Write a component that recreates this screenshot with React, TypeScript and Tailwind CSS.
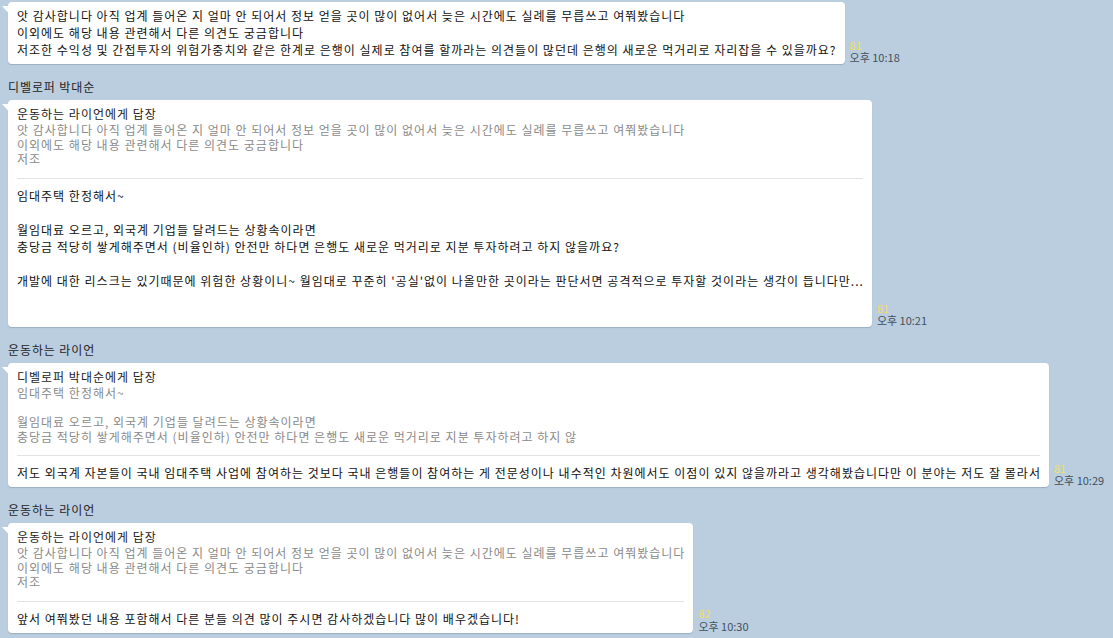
import React from "react";

const FONT = { fontFamily: '"Noto Sans CJK KR", "Noto Sans", sans-serif' };

function Tail() {
  return (
    <svg
      className="absolute left-[-6px] top-[4px]"
      width="6"
      height="7"
      viewBox="0 0 6 7"
    >
      <path d="M0 0H6.5V7Z" fill="#ffffff" />
    </svg>
  );
}

function Meta({ unread, time }: { unread: string; time: string }) {
  return (
    <div className="ml-[5px] shrink-0 whitespace-nowrap text-[11px] leading-[12.5px] pb-[0.5px]">
      <div className="text-[#f2dc66]">{unread}</div>
      <div className="text-[#45505b]">{time}</div>
    </div>
  );
}

function Lines({ lines, cls }: { lines: string[]; cls: string }) {
  return (
    <div className={cls}>
      {lines.map((l, i) => (
        <div key={i} className="whitespace-pre">
          {l === "" ? "\u00a0" : l}
        </div>
      ))}
    </div>
  );
}

function Name({ children }: { children: React.ReactNode }) {
  return (
    <div className="mt-[13.5px] text-[12px] leading-[17px] tracking-[0.9px] text-[#242424] whitespace-nowrap">
      {children}
    </div>
  );
}

function ReplyBubble({
  to,
  quoted,
  main,
  unread,
  time,
  extraBottom = "pb-[6px]",
}: {
  to: string;
  quoted: string[];
  main: string[];
  unread: string;
  time: string;
  extraBottom?: string;
}) {
  return (
    <div className="mt-[5.5px] flex items-end">
      <div
        className={`relative shrink-0 rounded-[4px] bg-white pl-[9px] pr-[8px] pt-[5px] ${extraBottom} shadow-[0_1px_1px_rgba(60,80,100,0.25)] text-[12px] tracking-[1px]`}
      >
        <Tail />
        <div className="whitespace-pre leading-[17px] text-[#1a1a1a]">{to}</div>
        <Lines lines={quoted} cls="mt-[1px] leading-[14.5px] text-[#8a8a8a]" />
        <div className="mt-[11px] mr-px h-px bg-[#e3e3e3]" />
        <Lines lines={main} cls="mt-[8px] leading-[17px] text-[#121212]" />
      </div>
      <Meta unread={unread} time={time} />
    </div>
  );
}

export default function App() {
  const q1 = [
    "앗 감사합니다 아직 업계 들어온 지 얼마 안 되어서 정보 얻을 곳이 많이 없어서 늦은 시간에도 실례를 무릅쓰고 여쭤봤습니다",
    "이외에도 해당 내용 관련해서 다른 의견도 궁금합니다",
    "저조",
  ];
  return (
    <div
      className="h-[638px] w-full overflow-hidden bg-[#bacee0] pl-[8px] pt-[2px]"
      style={FONT}
    >
      {/* message 1 */}
      <div className="flex items-end">
        <div className="relative shrink-0 rounded-[4px] bg-white pl-[9px] pr-[8px] pt-[5px] pb-[6px] shadow-[0_1px_1px_rgba(60,80,100,0.25)] text-[12px] tracking-[1px]">
          <Tail />
          <Lines
            cls="leading-[17px] text-[#121212]"
            lines={[
              "앗 감사합니다 아직 업계 들어온 지 얼마 안 되어서 정보 얻을 곳이 많이 없어서 늦은 시간에도 실례를 무릅쓰고 여쭤봤습니다",
              "이외에도 해당 내용 관련해서 다른 의견도 궁금합니다",
              "저조한 수익성 및 간접투자의 위험가중치와 같은 한계로 은행이 실제로 참여를 할까라는 의견들이 많던데 은행의 새로운 먹거리로 자리잡을 수 있을까요?",
            ]}
          />
        </div>
        <Meta unread="81" time="오후 10:18" />
      </div>

      <Name>디벨로퍼 박대순</Name>
      <ReplyBubble
        to="운동하는 라이언에게 답장"
        quoted={q1}
        main={[
          "임대주택 한정해서~",
          "",
          "월임대료 오르고, 외국계 기업들 달려드는 상황속이라면",
          "충당금 적당히 쌓게해주면서 (비율인하) 안전만 하다면 은행도 새로운 먹거리로 지분 투자하려고 하지 않을까요?",
          "",
          "개발에 대한 리스크는 있기때문에 위험한 상황이니~ 월임대로 꾸준히 '공실'없이 나올만한 곳이라는 판단서면 공격적으로 투자할 것이라는 생각이 듭니다만...",
          "",
          "",
        ]}
        unread="81"
        time="오후 10:21"
        extraBottom="pb-[4.5px]"
      />

      <Name>운동하는 라이언</Name>
      <ReplyBubble
        to="디벨로퍼 박대순에게 답장"
        quoted={[
          "임대주택 한정해서~",
          "",
          "월임대료 오르고, 외국계 기업들 달려드는 상황속이라면",
          "충당금 적당히 쌓게해주면서 (비율인하) 안전만 하다면 은행도 새로운 먹거리로 지분 투자하려고 하지 않",
        ]}
        main={[
          "저도 외국계 자본들이 국내 임대주택 사업에 참여하는 것보다 국내 은행들이 참여하는 게 전문성이나 내수적인 차원에서도 이점이 있지 않을까라고 생각해봤습니다만 이 분야는 저도 잘 몰라서",
        ]}
        unread="81"
        time="오후 10:29"
      />

      <Name>운동하는 라이언</Name>
      <ReplyBubble
        to="운동하는 라이언에게 답장"
        quoted={q1}
        main={[
          "앞서 여쭤봤던 내용 포함해서 다른 분들 의견 많이 주시면 감사하겠습니다 많이 배우겠습니다!",
        ]}
        unread="82"
        time="오후 10:30"
      />
    </div>
  );
}
